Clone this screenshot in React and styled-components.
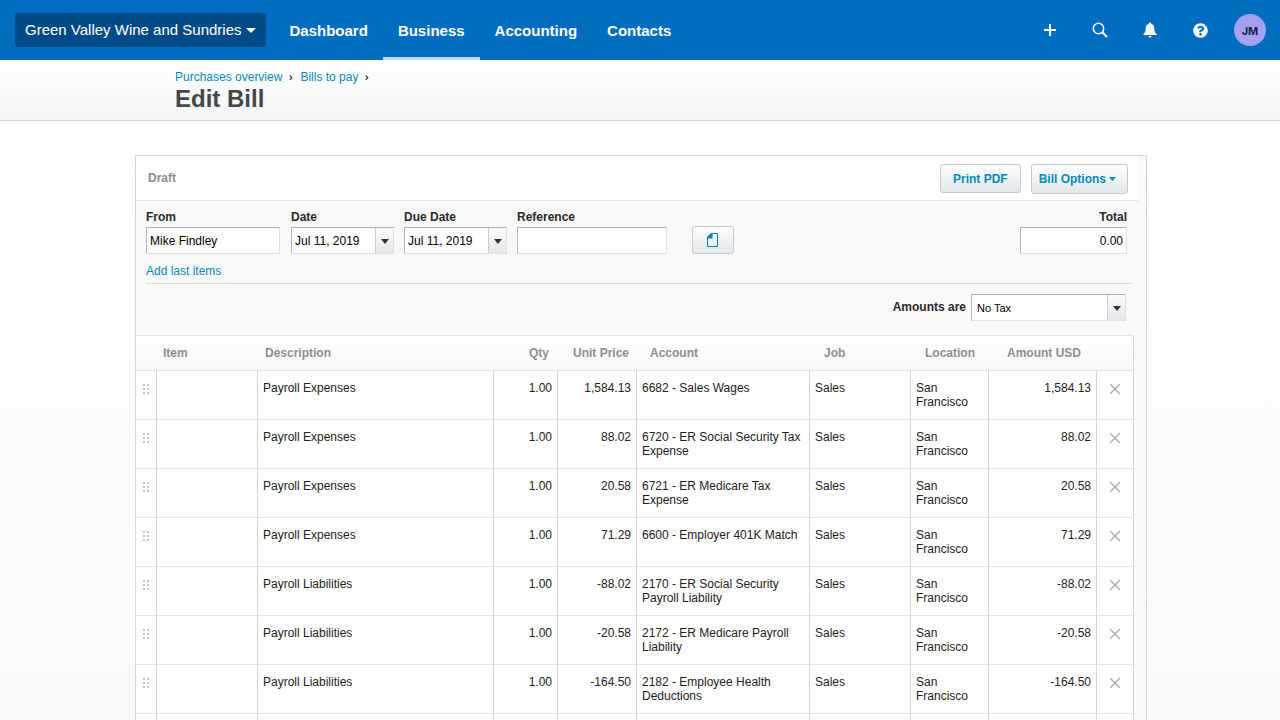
import React, { useState } from 'react';
import styled, { createGlobalStyle } from 'styled-components';
import { FaQuestionCircle } from 'react-icons/fa';

const GlobalStyle = createGlobalStyle`
  * {
    box-sizing: border-box;
  }

  body {
    margin: 0;
    font-family: "Liberation Sans", Arial, sans-serif;
    font-size: 12px;
    line-height: 14px;
    color: #222;
    background: #fdfdfd;
  }

  button, input, select {
    margin: 0;
    font-family: inherit;
    font-size: 12px;
    line-height: 14px;
  }

  button {
    cursor: pointer;
  }
`;

const Page = styled.div`
  min-height: 100vh;
  background: linear-gradient(#fff 120px, #fafafa 720px);
`;

const TopBar = styled.header`
  display: flex;
  align-items: center;
  height: 60px;
  padding: 0 14px 0 15px;
  background: #006dc1;
`;

const OrgButton = styled.button`
  display: flex;
  align-items: center;
  gap: 4px;
  height: 34px;
  padding: 0 10px;
  border: none;
  border-radius: 3px;
  background: #004b87;
  color: #fff;
  font-size: 15px;
  line-height: 18px;
  white-space: nowrap;
`;

const Nav = styled.nav`
  display: flex;
  margin-left: 9px;
`;

const NavLink = styled.a`
  height: 60px;
  padding: 0 15px;
  border-bottom: 3px solid ${props => props.$active ? '#bfd9f0' : 'transparent'};
  color: #fff;
  font-size: 15px;
  font-weight: bold;
  line-height: 62px;
  text-decoration: none;
`;

const Tools = styled.div`
  display: flex;
  align-items: center;
  margin-left: auto;
`;

const ToolButton = styled.button`
  display: flex;
  align-items: center;
  justify-content: center;
  width: 50px;
  height: 60px;
  padding: 0;
  border: none;
  background: none;
  color: #fff;
`;

const Avatar = styled.button`
  width: 32px;
  height: 32px;
  margin-left: 9px;
  padding: 2px 0 0;
  border: none;
  border-radius: 50%;
  background: #a4a2f0;
  color: #1a1d4a;
  font-family: Inter, sans-serif;
  font-size: 11px;
  font-weight: bold;
`;

const TitleBar = styled.div`
  padding: 10px 16px 8px;
  border-bottom: 1px solid #d5d6d8;
  background: linear-gradient(#fff, #f3f4f7);
`;

const TitleInner = styled.div`
  max-width: 930px;
  margin: 0 auto;
`;

const Breadcrumb = styled.nav`
  display: flex;
  gap: 7px;
`;

const Link = styled.a`
  color: #048abb;
  text-decoration: none;
`;

const PageTitle = styled.h1`
  margin: 1px 0 0;
  color: #444648;
  font-size: 24px;
  line-height: 27px;
`;

const Main = styled.main`
  padding: 34px 16px 0 18px;
`;

const Panel = styled.section`
  max-width: 1012px;
  margin: 0 auto;
  border: 1px solid #d5d6d8;
  background: #f9f9f9;
`;

const StatusRow = styled.div`
  display: flex;
  align-items: flex-start;
  justify-content: space-between;
  height: 45px;
  margin-right: 8px;
  padding: 8px 10px 0 12px;
  border-bottom: 1px solid #e3e4e6;
  background: #fff;
`;

const Status = styled.span`
  padding-top: 7px;
  color: #8e8e8e;
  font-weight: bold;
`;

const Actions = styled.div`
  display: flex;
  align-items: flex-start;
  gap: 10px;
`;

const Button = styled.button`
  display: flex;
  align-items: center;
  justify-content: center;
  gap: 3px;
  height: 29px;
  padding: 0 12px;
  border: 1px solid #c6cacd;
  border-radius: 3px;
  background: linear-gradient(#fdfdfd, #e3e7ea);
  color: #048abb;
  font-weight: bold;
`;

const MenuButton = styled(Button)`
  height: 30px;
  padding: 0 11px 0 7px;
`;

const IconButton = styled(Button)`
  width: 42px;
  height: 28px;
  padding: 0;
`;

const Fields = styled.div`
  display: flex;
  align-items: flex-end;
  padding: 9px 19px 0 10px;
`;

const Field = styled.div`
  display: flex;
  flex-direction: column;
  gap: 3px;
  width: ${props => props.$width}px;
  margin-right: ${props => props.$gap || 0}px;
  margin-left: ${props => props.$end ? 'auto' : '0'};
  text-align: ${props => props.$end ? 'right' : 'left'};
`;

const Label = styled.label`
  color: #2a2a2a;
  font-weight: bold;
`;

const Control = styled.div`
  position: relative;
  display: flex;
  width: ${props => props.$width ? `${props.$width}px` : 'auto'};
  height: 27px;
  border: 1px solid #dfe0e3;
  border-top-color: #a9abb3;
  border-left-color: #b4b6bd;
  background: #fff;
`;

const TextInput = styled.input`
  flex: 1;
  min-width: 0;
  padding: 0 3px;
  border: none;
  background: none;
  color: #000;
  text-align: inherit;
`;

const DropButton = styled.button`
  display: flex;
  align-items: center;
  justify-content: center;
  width: 18px;
  padding: 2px 0 0;
  border: none;
  border-left: 1px solid #c9cbd1;
  background: linear-gradient(#fcfcfc, #e4e7eb);
  color: #2c3640;
`;

const Select = styled.select`
  flex: 1;
  padding: 0 22px 0 5px;
  border: none;
  background: none;
  color: #000;
  font-size: 11px;
  appearance: none;
`;

const SelectArrow = styled(DropButton).attrs({ as: 'span' })`
  position: absolute;
  top: 0;
  right: 0;
  bottom: 0;
  pointer-events: none;
`;

const LastItems = styled.div`
  margin: 10px 14px 0 10px;
  padding-bottom: 5px;
  border-bottom: 1px solid #d9dadc;
`;

const TaxRow = styled.div`
  display: flex;
  align-items: flex-start;
  justify-content: flex-end;
  gap: 5px;
  padding: 10px 20px 14px 10px;
  line-height: 26px;
`;

const TableWrap = styled.div`
  margin-right: 12px;
  border-top: 1px solid #e3e4e6;
  background: #fff;
`;

const Table = styled.table`
  width: 100%;
  border-collapse: separate;
  border-spacing: 0;
  table-layout: fixed;
`;

const Th = styled.th`
  width: ${props => props.$width ? `${props.$width}px` : 'auto'};
  height: 35px;
  padding: 0 ${props => props.$right || 0}px 0 ${props => props.$left || 0}px;
  border-bottom: 1px solid #e3e4e6;
  background: linear-gradient(#fff, #f8f8f8);
  color: #8e8e8e;
  text-align: ${props => props.$right ? 'right' : 'left'};
  white-space: nowrap;

  &:last-child {
    border-right: 1px solid #d5d6d8;
  }
`;

const Td = styled.td`
  height: 49px;
  padding: 10px 5px;
  border-right: 1px solid #d5d6d8;
  border-bottom: 1px solid #e5e5e5;
  text-align: ${props => props.$numeric ? 'right' : 'left'};
  vertical-align: top;
`;

const RowButton = styled.button`
  display: block;
  padding: 1px 0 0;
  border: none;
  background: none;
`;

const Handle = styled(RowButton)`
  margin-left: 2px;
`;

const Remove = styled(RowButton)`
  margin: 0 auto;
`;

const columns = [
  { label: '', width: 21 },
  { label: 'Item', width: 101, left: 6 },
  { label: 'Description', left: 7 },
  { label: 'Qty', width: 64, right: 9 },
  { label: 'Unit Price', width: 79, right: 8 },
  { label: 'Account', width: 173, left: 13 },
  { label: 'Job', width: 101, left: 14 },
  { label: 'Location', width: 78, left: 14 },
  { label: 'Amount USD', width: 108, right: 16 },
  { label: '', width: 37 },
];

const lines = [
  { description: 'Payroll Expenses', price: '1,584.13', account: '6682 - Sales Wages' },
  { description: 'Payroll Expenses', price: '88.02', account: '6720 - ER Social Security Tax Expense' },
  { description: 'Payroll Expenses', price: '20.58', account: '6721 - ER Medicare Tax Expense' },
  { description: 'Payroll Expenses', price: '71.29', account: '6600 - Employer 401K Match' },
  { description: 'Payroll Liabilities', price: '-88.02', account: '2170 - ER Social Security Payroll Liability' },
  { description: 'Payroll Liabilities', price: '-20.58', account: '2172 - ER Medicare Payroll Liability' },
  { description: 'Payroll Liabilities', price: '-164.50', account: '2182 - Employee Health Deductions' },
];

const navItems = ['Dashboard', 'Business', 'Accounting', 'Contacts'];

const Caret = ({ width = 8, height = 5 }) => (
  <svg width={width} height={height} viewBox="0 0 8 5" preserveAspectRatio="none" aria-hidden="true">
    <path d="M0 0h8L4 5z" fill="currentColor" />
  </svg>
);

const PlusIcon = () => (
  <svg width="12" height="12" viewBox="0 0 12 12" aria-hidden="true">
    <path d="M6 0v12M0 6h12" stroke="currentColor" strokeWidth="2" />
  </svg>
);

const SearchIcon = () => (
  <svg width="16" height="16" viewBox="0 0 16 16" fill="none" stroke="currentColor" aria-hidden="true">
    <circle cx="6.5" cy="6.5" r="5.2" strokeWidth="1.5" />
    <path d="M10.3 10.3l4.7 4.7" strokeWidth="2" />
  </svg>
);

const BellIcon = () => (
  <svg width="14" height="16" viewBox="0 0 14 16" fill="currentColor" aria-hidden="true">
    <path d="M7 .5c.7 0 1.200.5 1.200 1.200C10.300 2.300 11.300 4 11.300 6c0 3.500.7 4.800 2.200 6v1H.5v-1c1.500-1.200 2.200-2.500 2.200-6 0-2 1-3.700 3.100-4.300C5.800 1 6.300.5 7 .5z" />
    <path d="M5.500 14h3c0 .9-.6 1.500-1.500 1.500S5.500 14.900 5.500 14z" />
  </svg>
);

const Chevron = () => (
  <svg width="4" height="14" viewBox="0 0 4 14" fill="none" aria-hidden="true">
    <path d="M.8 5.500l2 2.200-2 2.200" stroke="#333" strokeWidth="1.200" />
  </svg>
);

const FileIcon = () => (
  <svg width="12" height="14" viewBox="0 0 12 14" aria-hidden="true">
    <path d="M5 .5h5.500v13H.5V5" fill="none" stroke="#0781b5" />
    <path d="M0 5.500V4l4-4h1.500v5.500z" fill="#0781b5" />
  </svg>
);

const DragIcon = () => (
  <svg width="6" height="14" viewBox="0 0 6 14" fill="#c4c4c4" aria-hidden="true">
    <path d="M0 2h2v2H0zM4 2h2v2H4zM0 6h2v2H0zM4 6h2v2H4zM0 10h2v2H0zM4 10h2v2H4z" />
  </svg>
);

const CloseIcon = () => (
  <svg width="10" height="14" viewBox="0 0 10 14" aria-hidden="true">
    <path d="M0 2l10 10M10 2L0 12" stroke="#a9abae" strokeWidth="1.4" />
  </svg>
);

const DateField = ({ id, label, value, onChange }) => (
  <Field $width={103} $gap={10}>
    <Label htmlFor={id}>{label}</Label>
    <Control>
      <TextInput id={id} value={value} onChange={e => onChange(e.target.value)} />
      <DropButton type="button" aria-label={label}>
        <Caret />
      </DropButton>
    </Control>
  </Field>
);

const App = () => {
  const [from, setFrom] = useState('Mike Findley');
  const [date, setDate] = useState('Jul 11, 2019');
  const [dueDate, setDueDate] = useState('Jul 11, 2019');
  const [reference, setReference] = useState('');
  const [total, setTotal] = useState('0.00');

  return (
    <Page>
      <GlobalStyle />
      <TopBar>
        <OrgButton type="button">
          Green Valley Wine and Sundries
          <Caret width={10} />
        </OrgButton>
        <Nav>
          {navItems.map(item => (
            <NavLink key={item} href="#" $active={item === 'Business'}>{item}</NavLink>
          ))}
        </Nav>
        <Tools>
          <ToolButton type="button" aria-label="Add"><PlusIcon /></ToolButton>
          <ToolButton type="button" aria-label="Search"><SearchIcon /></ToolButton>
          <ToolButton type="button" aria-label="Notifications"><BellIcon /></ToolButton>
          <ToolButton type="button" aria-label="Help"><FaQuestionCircle size={15} /></ToolButton>
          <Avatar type="button">JM</Avatar>
        </Tools>
      </TopBar>

      <TitleBar>
        <TitleInner>
          <Breadcrumb>
            <Link href="#">Purchases overview</Link>
            <Chevron />
            <Link href="#">Bills to pay</Link>
            <Chevron />
          </Breadcrumb>
          <PageTitle>Edit Bill</PageTitle>
        </TitleInner>
      </TitleBar>

      <Main>
        <Panel>
          <StatusRow>
            <Status>Draft</Status>
            <Actions>
              <Button type="button">Print PDF</Button>
              <MenuButton type="button">
                Bill Options
                <Caret width={7} height={4} />
              </MenuButton>
            </Actions>
          </StatusRow>

          <Fields>
            <Field $width={134} $gap={11}>
              <Label htmlFor="from">From</Label>
              <Control>
                <TextInput id="from" value={from} onChange={e => setFrom(e.target.value)} />
              </Control>
            </Field>
            <DateField id="date" label="Date" value={date} onChange={setDate} />
            <DateField id="due-date" label="Due Date" value={dueDate} onChange={setDueDate} />
            <Field $width={150} $gap={25}>
              <Label htmlFor="reference">Reference</Label>
              <Control>
                <TextInput id="reference" value={reference} onChange={e => setReference(e.target.value)} />
              </Control>
            </Field>
            <IconButton type="button" aria-label="Attach file">
              <FileIcon />
            </IconButton>
            <Field $width={107} $end>
              <Label htmlFor="total">Total</Label>
              <Control>
                <TextInput id="total" value={total} onChange={e => setTotal(e.target.value)} />
              </Control>
            </Field>
          </Fields>

          <LastItems>
            <Link href="#">Add last items</Link>
          </LastItems>

          <TaxRow>
            <Label htmlFor="tax">Amounts are</Label>
            <Control $width={155}>
              <Select id="tax" defaultValue="none">
                <option value="none">No Tax</option>
              </Select>
              <SelectArrow><Caret /></SelectArrow>
            </Control>
          </TaxRow>

          <TableWrap>
            <Table>
              <thead>
                <tr>
                  {columns.map((column, index) => (
                    <Th key={index} $width={column.width} $left={column.left} $right={column.right}>
                      {column.label}
                    </Th>
                  ))}
                </tr>
              </thead>
              <tbody>
                {lines.map(line => (
                  <tr key={line.account}>
                    <Td><Handle type="button" aria-label="Move line"><DragIcon /></Handle></Td>
                    <Td />
                    <Td>{line.description}</Td>
                    <Td $numeric>1.00</Td>
                    <Td $numeric>{line.price}</Td>
                    <Td>{line.account}</Td>
                    <Td>Sales</Td>
                    <Td>San Francisco</Td>
                    <Td $numeric>{line.price}</Td>
                    <Td><Remove type="button" aria-label="Remove line"><CloseIcon /></Remove></Td>
                  </tr>
                ))}
                <tr>
                  {columns.map((column, index) => <Td key={index} />)}
                </tr>
              </tbody>
            </Table>
          </TableWrap>
        </Panel>
      </Main>
    </Page>
  );
};

export default App;
